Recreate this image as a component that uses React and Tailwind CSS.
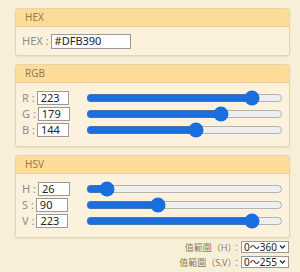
import React, { useState } from 'react';

const font = { fontFamily: '"Noto Sans", "Noto Sans CJK TC", sans-serif' };

const Panel = ({ title, children }) => (
    <div className="rounded-[3px] border border-[#e6d4ab] bg-[#fbf1dd] shadow-[0_1px_2px_rgba(0,0,0,0.08)] overflow-hidden">
        <div className="h-[18px] bg-[#fddc99] border-b border-[#efcf8f] px-[9px] flex items-center text-[10px] text-[#9b7a4c]">
            {title}
        </div>
        {children}
    </div>
);

const SliderRow = ({ label, value, max, onChange }) => (
    <div className="flex items-center h-[16px]">
        <div className="w-[70px] shrink-0 flex items-center pl-[6px]">
            <span className="text-[11px] text-[#8c8c8c] pr-[2px]">{label} :</span>
            <input
                type="text"
                value={value}
                onChange={(e) => onChange(e.target.value)}
                className="w-[32px] h-[14px] border border-[#999] bg-white text-[11px] text-[#222] px-[3px] outline-none"
            />
        </div>
        <input
            type="range"
            min={0}
            max={max}
            value={value}
            onChange={(e) => onChange(e.target.value)}
            className="w-[197px] h-[16px] accent-[#1a6fe0]"
        />
    </div>
);

const RangeSelect = ({ label, value }) => (
    <div className="flex items-center text-[9px] text-[#8c7a5c]">
        <span>{label}</span>
        <div className="relative">
            <select className="appearance-none w-[48px] h-[12px] border border-[#999] bg-white text-[10px] text-[#222] leading-none pl-[2px]">
                <option>{value}</option>
            </select>
            <svg className="absolute right-[3px] top-[3px] pointer-events-none" width="7" height="6" viewBox="0 0 7 6">
                <path d="M1 1.5 L3.5 4 L6 1.5" stroke="#333" strokeWidth="1.4" fill="none" />
            </svg>
        </div>
    </div>
);

export default function App() {
    const [rgb, setRgb] = useState({ r: 223, g: 179, b: 144 });
    const [hsv, setHsv] = useState({ h: 26, s: 90, v: 223 });

    return (
        <div className="w-[300px] h-[272px] bg-[#f8efd9] pt-[8px] pl-[15px] pr-[10px]" style={font}>
            <div className="flex flex-col gap-[8px]">
                <Panel title="HEX">
                    <div className="flex items-center h-[15px] pl-[6px] mt-[7px] mb-[6px]">
                        <span className="text-[11px] text-[#8c8c8c] pr-[2px]">HEX :</span>
                        <input
                            type="text"
                            defaultValue="#DFB390"
                            className="w-[80px] h-[15px] border border-[#999] bg-white text-[11px] text-[#222] px-[3px] outline-none"
                        />
                    </div>
                </Panel>

                <Panel title="RGB">
                    <div className="flex flex-col pt-[7px] pb-[8px]">
                        <SliderRow label="R" value={rgb.r} max={255} onChange={(v) => setRgb({ ...rgb, r: v })} />
                        <SliderRow label="G" value={rgb.g} max={255} onChange={(v) => setRgb({ ...rgb, g: v })} />
                        <SliderRow label="B" value={rgb.b} max={255} onChange={(v) => setRgb({ ...rgb, b: v })} />
                    </div>
                </Panel>

                <Panel title="HSV">
                    <div className="flex flex-col pt-[7px] pb-[8px]">
                        <SliderRow label="H" value={hsv.h} max={360} onChange={(v) => setHsv({ ...hsv, h: v })} />
                        <SliderRow label="S" value={hsv.s} max={255} onChange={(v) => setHsv({ ...hsv, s: v })} />
                        <SliderRow label="V" value={hsv.v} max={255} onChange={(v) => setHsv({ ...hsv, v: v })} />
                    </div>
                </Panel>
            </div>

            <div className="flex flex-col items-end gap-[1px] mt-[3px] pr-[1px]">
                <RangeSelect label="值範圍（H）：" value="0～360" />
                <RangeSelect label="值範圍（S,V）：" value="0～255" />
            </div>
        </div>
    );
}
